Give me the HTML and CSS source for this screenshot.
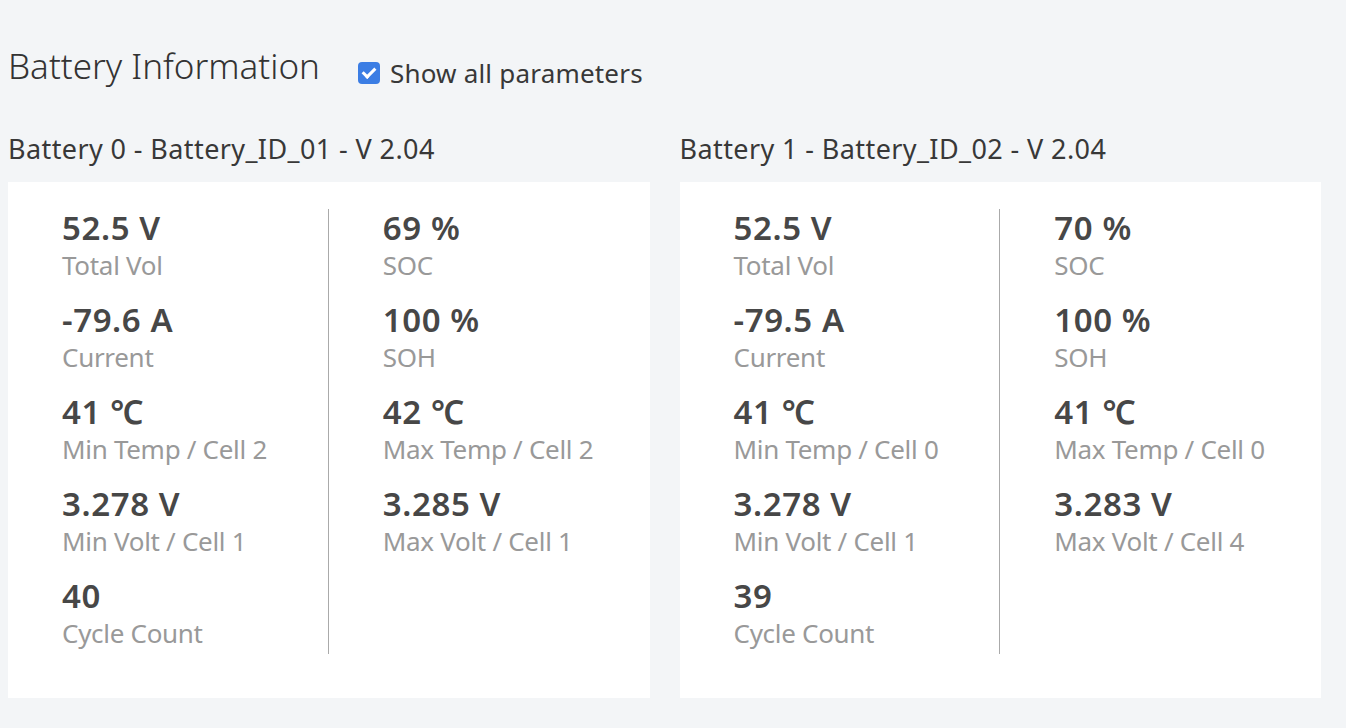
FILE: index.html
```html
<!DOCTYPE html>
<html lang="en">
<head>
    <meta charset="UTF-8">
    <meta name="viewport" content="width=device-width, initial-scale=1.0">
    <title>Battery Information</title>
    <link rel="stylesheet" href="styles.css">
</head>
<body>
    <div class="page">
        <!-- Baslik ve parametre secimi -->
        <div class="top">
            <h1>Battery Information</h1>
            <label class="show-all">
                <input type="checkbox" checked>
                <span>Show all parameters</span>
            </label>
        </div>

        <div class="batteries">
            <!-- Battery 0 -->
            <div class="battery">
                <h2>Battery 0 - Battery_ID_01 - V 2.04</h2>
                <div class="card">
                    <div class="col">
                        <div class="item"><div class="value">52.5 V</div><div class="label">Total Vol</div></div>
                        <div class="item"><div class="value">-79.6 A</div><div class="label">Current</div></div>
                        <div class="item"><div class="value">41 ℃</div><div class="label">Min Temp / Cell 2</div></div>
                        <div class="item"><div class="value">3.278 V</div><div class="label">Min Volt / Cell 1</div></div>
                        <div class="item"><div class="value">40</div><div class="label">Cycle Count</div></div>
                    </div>
                    <div class="col">
                        <div class="item"><div class="value">69 %</div><div class="label">SOC</div></div>
                        <div class="item"><div class="value">100 %</div><div class="label">SOH</div></div>
                        <div class="item"><div class="value">42 ℃</div><div class="label">Max Temp / Cell 2</div></div>
                        <div class="item"><div class="value">3.285 V</div><div class="label">Max Volt / Cell 1</div></div>
                    </div>
                </div>
            </div>

            <!-- Battery 1 -->
            <div class="battery">
                <h2>Battery 1 - Battery_ID_02 - V 2.04</h2>
                <div class="card">
                    <div class="col">
                        <div class="item"><div class="value">52.5 V</div><div class="label">Total Vol</div></div>
                        <div class="item"><div class="value">-79.5 A</div><div class="label">Current</div></div>
                        <div class="item"><div class="value">41 ℃</div><div class="label">Min Temp / Cell 0</div></div>
                        <div class="item"><div class="value">3.278 V</div><div class="label">Min Volt / Cell 1</div></div>
                        <div class="item"><div class="value">39</div><div class="label">Cycle Count</div></div>
                    </div>
                    <div class="col">
                        <div class="item"><div class="value">70 %</div><div class="label">SOC</div></div>
                        <div class="item"><div class="value">100 %</div><div class="label">SOH</div></div>
                        <div class="item"><div class="value">41 ℃</div><div class="label">Max Temp / Cell 0</div></div>
                        <div class="item"><div class="value">3.283 V</div><div class="label">Max Volt / Cell 4</div></div>
                    </div>
                </div>
            </div>
        </div>
    </div>
</body>
</html>
```

FILE: styles.css
```css
/* Genel stil */
body {
    margin: 0;
    font-family: "Noto Sans", "Noto Sans CJK JP", sans-serif;
    background-color: #f3f5f7;
    color: #333;
}

.page {
    padding: 45px 25px 0 8px;
}

/* Baslik satiri */
.top {
    display: flex;
    align-items: flex-start;
    gap: 38px;
}

h1 {
    margin: 0;
    font-size: 35px;
    line-height: 42px;
    font-weight: 300;
    color: #333;
}

.show-all {
    display: flex;
    align-items: center;
    gap: 10px;
    margin-top: 10px;
    font-size: 26px;
    line-height: 36px;
    letter-spacing: 0.2px;
    color: #383838;
}

.show-all input {
    appearance: none;
    position: relative;
    width: 22px;
    height: 22px;
    margin: 0;
    border-radius: 4px;
    background-color: #3b7de4;
}

.show-all input::after {
    content: "";
    position: absolute;
    left: 7px;
    top: 3px;
    width: 5px;
    height: 10px;
    border-right: 3px solid #fff;
    border-bottom: 3px solid #fff;
    transform: rotate(45deg);
}

/* Batarya kartlari */
.batteries {
    display: grid;
    grid-template-columns: 1fr 1fr;
    gap: 30px;
    margin-top: 42px;
}

h2 {
    margin: 0 0 17px;
    font-size: 27px;
    line-height: 32px;
    font-weight: 400;
    letter-spacing: 0.4px;
    color: #383838;
}

.card {
    display: grid;
    grid-template-columns: 1fr 1fr;
    background-color: #fff;
    padding: 27px 0 44px;
}

.col {
    padding: 0 0 3px 54px;
}

.col:first-child {
    border-right: 1px solid #aaa;
}

.item {
    margin-bottom: 18px;
}

.item:last-child {
    margin-bottom: 0;
}

.value {
    font-size: 33px;
    line-height: 38px;
    font-weight: 600;
    letter-spacing: 0.6px;
    color: #474747;
}

.label {
    font-size: 26px;
    line-height: 36px;
    letter-spacing: -0.3px;
    color: #999;
}
```
